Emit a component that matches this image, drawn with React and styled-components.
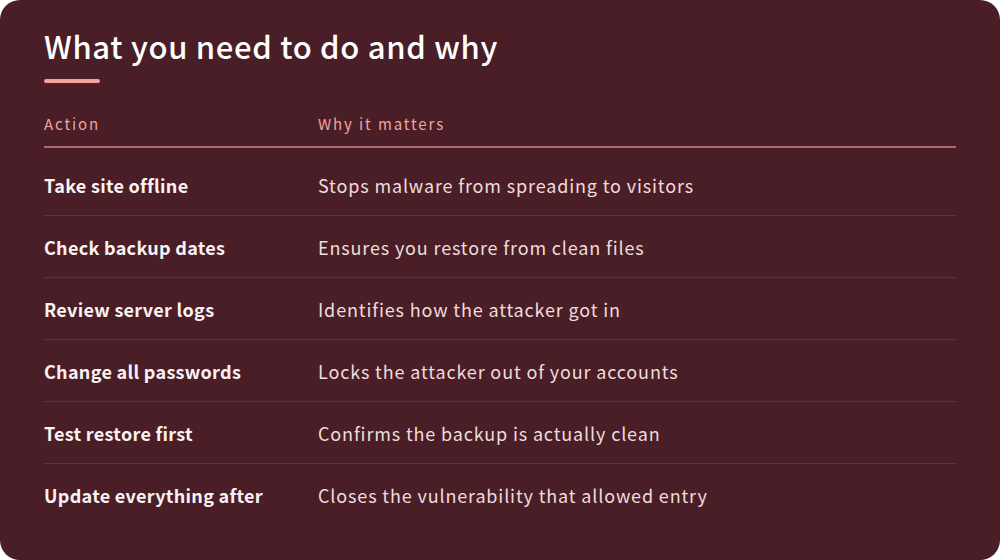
import React from "react";
import styled, { createGlobalStyle } from "styled-components";

const rows = [
  ["Take site offline", "Stops malware from spreading to visitors"],
  ["Check backup dates", "Ensures you restore from clean files"],
  ["Review server logs", "Identifies how the attacker got in"],
  ["Change all passwords", "Locks the attacker out of your accounts"],
  ["Test restore first", "Confirms the backup is actually clean"],
  ["Update everything after", "Closes the vulnerability that allowed entry"],
];

const GlobalStyle = createGlobalStyle`
  html, body {
    margin: 0;
    padding: 0;
    background: #ffffff;
  }
  body {
    font-family: "Noto Sans CJK KR", "Noto Sans", sans-serif;
    font-variant-ligatures: none;
  }
`;

const Card = styled.div`
  width: 1000px;
  height: 560px;
  box-sizing: border-box;
  background: #4a1e26;
  border-radius: 20px;
  padding: 24px 44px 0;
  color: #f6ecec;
`;

const Title = styled.h1`
  margin: 0;
  font-size: 31px;
  line-height: 44px;
  font-weight: 500;
  letter-spacing: 0.7px;
  color: #ffffff;
`;

const Accent = styled.div`
  width: 56px;
  height: 4px;
  border-radius: 2px;
  background: #f4a2a0;
  margin-top: 11px;
`;

const Table = styled.div`
  margin-top: 30px;
`;

const HeadRow = styled.div`
  display: grid;
  grid-template-columns: 274px 1fr;
  height: 33px;
  border-bottom: 2px solid #b9676c;
  margin-bottom: 6px;
`;

const Row = styled.div`
  display: grid;
  grid-template-columns: 274px 1fr;
  align-items: center;
  height: 61px;
  border-bottom: ${(p) => (p.last ? "none" : "1px solid #62303a")};
`;

const HeadCell = styled.div`
  font-size: 15px;
  letter-spacing: 1.9px;
  color: #f0a3a2;
`;

const Action = styled.div`
  font-size: 18px;
  font-weight: 700;
  letter-spacing: 0.3px;
  color: #fbf3f3;
`;

const Reason = styled.div`
  font-size: 18px;
  font-weight: 400;
  letter-spacing: 0.85px;
  color: #eedcdc;
`;

export default function App() {
  return (
    <>
      <GlobalStyle />
      <Card>
        <Title>What you need to do and why</Title>
        <Accent />
        <Table>
          <HeadRow>
            <HeadCell>Action</HeadCell>
            <HeadCell>Why it matters</HeadCell>
          </HeadRow>
          {rows.map(([action, reason], i) => (
            <Row key={action} last={i === rows.length - 1}>
              <Action>{action}</Action>
              <Reason>{reason}</Reason>
            </Row>
          ))}
        </Table>
      </Card>
    </>
  );
}
